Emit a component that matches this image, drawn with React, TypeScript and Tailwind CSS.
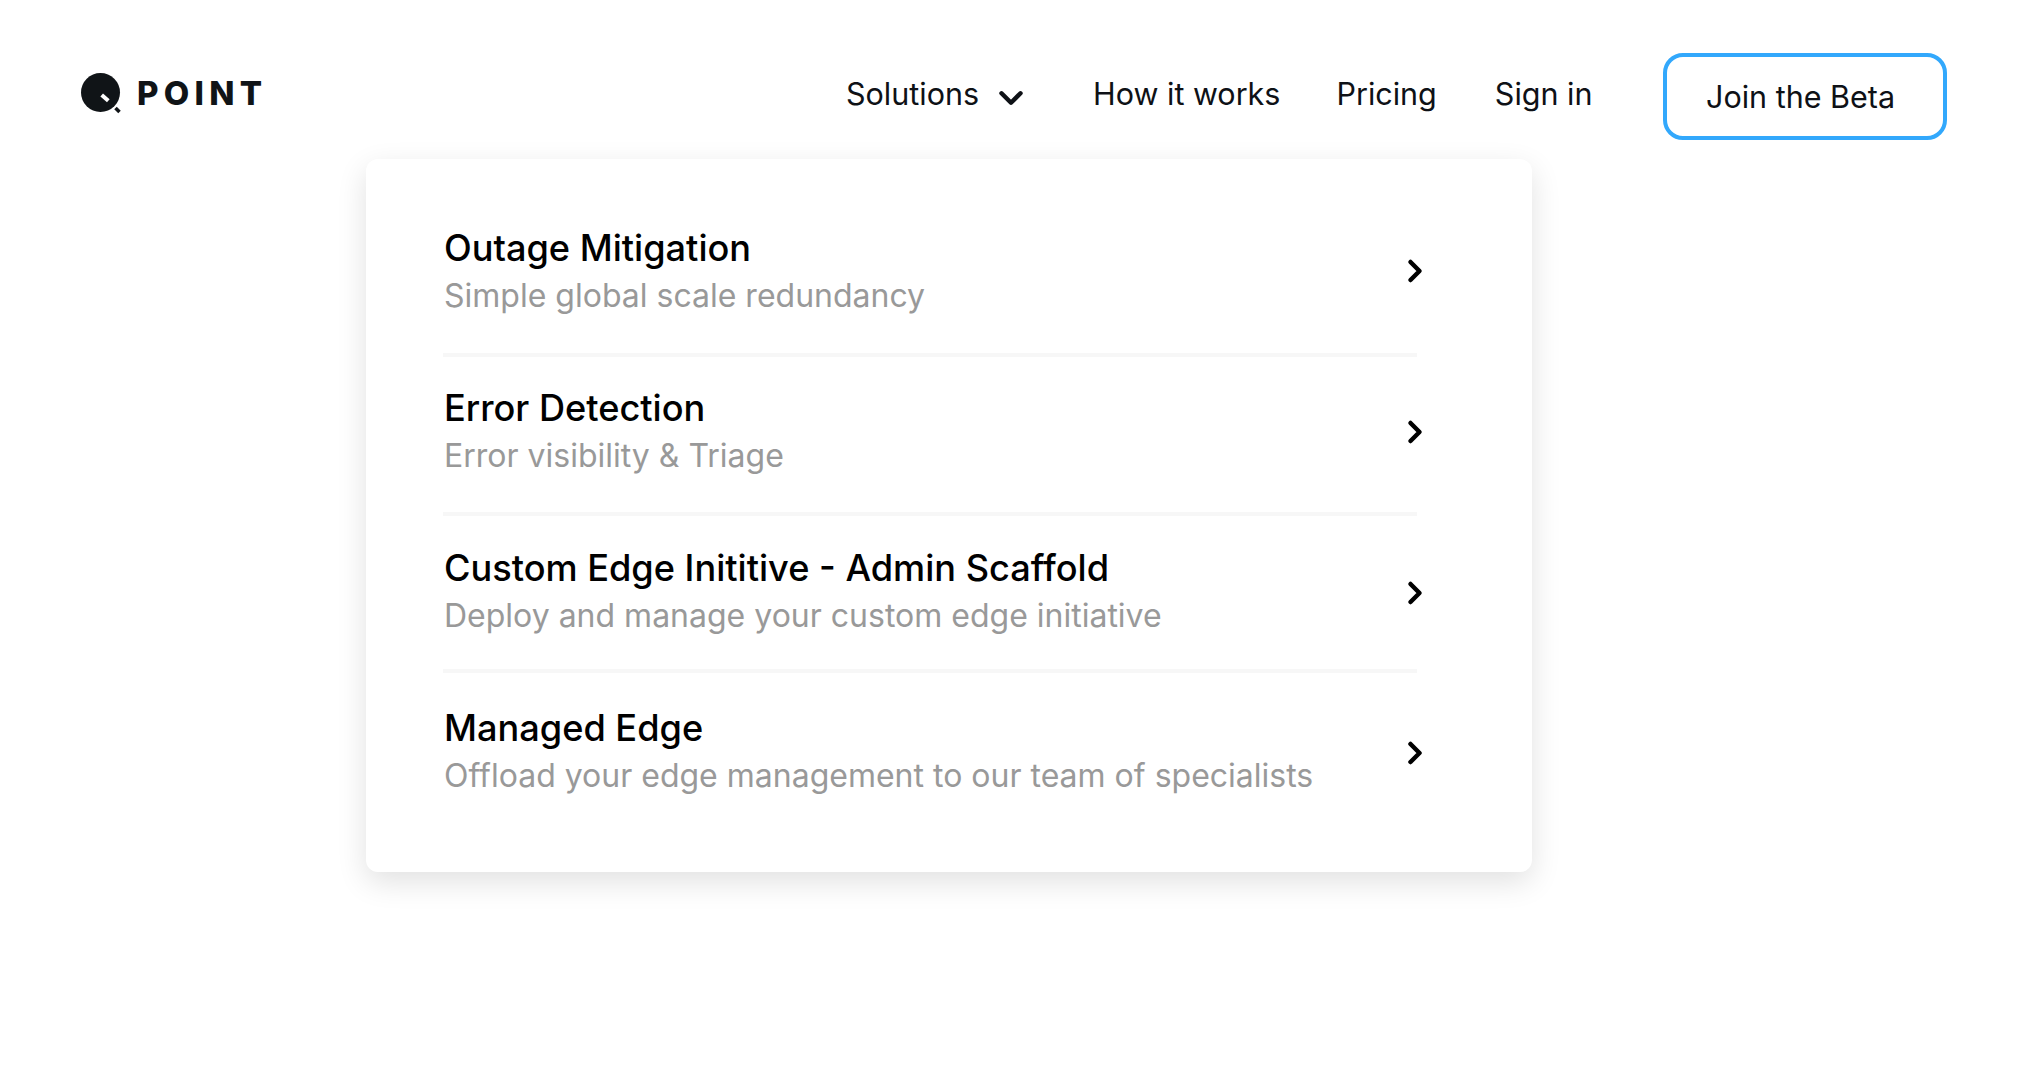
import { ChevronDown, ChevronRight } from 'lucide-react';

const items = [
    { title: 'Outage Mitigation', sub: 'Simple global scale redundancy', row: 'h-[164px]', text: '' },
    { title: 'Error Detection', sub: 'Error visibility & Triage', row: 'h-[155px] pb-[5px]', text: 'mb-[2px]' },
    { title: 'Custom Edge Inititive - Admin Scaffold', sub: 'Deploy and manage your custom edge initiative', row: 'h-[153px]', text: 'mb-[2px]' },
    { title: 'Managed Edge', sub: 'Offload your edge management to our team of specialists', row: 'h-[160px] mb-[2px]', text: 'mb-[4px]' },
];

function Logo() {
    return (
        <svg width="40" height="44" viewBox="0 0 40 44" className="shrink-0">
            <circle cx="19.5" cy="19.5" r="19.5" fill="#101417" />
            <path d="M20.7 22 L27.3 27.7" stroke="#fff" strokeWidth="4" />
            <path d="M34.5 35 L38.5 39" stroke="#101417" strokeWidth="3.5" />
        </svg>
    );
}

export default function App() {
    return (
        <div className="min-h-[1073px] bg-white text-[#0e1116] font-['Inter',sans-serif]">
            {/* Top nav */}
            <header className="flex items-start pl-[81px] pt-[53px] h-[159px]">
                <div className="flex items-center gap-[16px] mt-[20px] w-[765px]">
                    <Logo />
                    <span className="text-[33px] leading-none font-extrabold tracking-[0.16em] text-[#101417] -mt-[4px]">POINT</span>
                </div>
                <nav className="flex items-center text-[30.5px] leading-[40px] mt-[18px]">
                    <span>Solutions</span>
                    <ChevronDown className="ml-[13px] mr-[63px] mt-[8px]" size={38} strokeWidth={2.8} />
                    <span className="mr-[56px]">How it works</span>
                    <span className="mr-[58px]">Pricing</span>
                    <span className="mr-[70px]">Sign in</span>
                </nav>
                <button className="w-[284px] h-[87px] rounded-[20px] border-4 border-[#32a8fc] text-[30.5px] pr-[8px]">
                    Join the Beta
                </button>
            </header>

            {/* Solutions dropdown */}
            <div className="ml-[366px] w-[1166px] h-[713px] rounded-[12px] bg-white shadow-[0_10px_30px_rgba(0,0,0,0.12)] pl-[77px] pr-[115px] pt-[30px]">
                {items.map((item, i) => (
                    <div key={item.title}>
                        <div className={`flex items-center justify-between ${item.row}`}>
                            <div className={`pl-[1px] ${item.text}`}>
                                <div className="text-[36.15px] leading-[49px] font-medium text-black">{item.title}</div>
                                <div className="text-[32px] leading-[46px] text-[#999999]">{item.sub}</div>
                            </div>
                            <ChevronRight className="-mr-[16px]" size={36} strokeWidth={3} color="#000" />
                        </div>
                        {i < 3 && <div className="h-[4px] bg-[#f7f7f7]" />}
                    </div>
                ))}
            </div>
        </div>
    );
}
